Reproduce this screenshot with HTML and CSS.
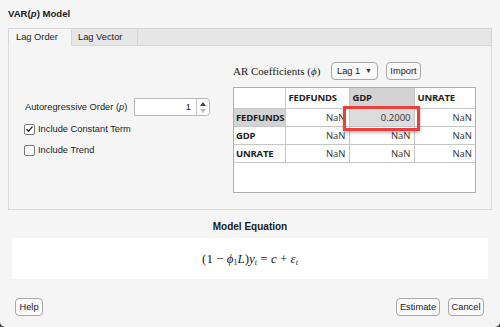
FILE: index.html
```html
<!DOCTYPE html>
<html>
<head>
<meta charset="utf-8">
<link rel="stylesheet" href="styles.css">
</head>
<body>
<div class="window">
  <div class="title">VAR(<i>p</i>) Model</div>
  <div class="tabs">
    <div class="tab active">Lag Order</div>
    <div class="tab second">Lag Vector</div>
    <div class="tab-fill"></div>
  </div>
  <div class="panel">
    <div class="left">
      <div class="order-row">
        <span class="label">Autoregressive Order (<i>p</i>)</span>
        <div class="spinner">
          <div class="spin-value">1</div>
          <div class="spin-btns">
            <span class="up"></span>
            <span class="down"></span>
          </div>
        </div>
      </div>
      <label class="check-row">
        <span class="box checked">
          <svg width="10" height="10" viewBox="0 0 10 10"><path d="M1.8 5.2 L3.9 7.4 L8.3 2.4" fill="none" stroke="#222" stroke-width="1.5"/></svg>
        </span>
        <span>Include Constant Term</span>
      </label>
      <label class="check-row">
        <span class="box"></span>
        <span>Include Trend</span>
      </label>
    </div>
    <div class="right">
      <div class="coef-row">
        <span class="coef-label">AR Coefficients (<i>ϕ</i>)</span>
        <div class="dropdown"><span>Lag 1</span><span class="caret">▼</span></div>
        <div class="btn small">Import</div>
      </div>
      <div class="table-wrap">
        <table class="grid">
          <colgroup><col class="c0"><col class="c1"><col class="c2"><col class="c3"></colgroup>
          <tr class="hdr">
            <th class="corner"></th>
            <th>FEDFUNDS</th>
            <th class="sel">GDP</th>
            <th>UNRATE</th>
          </tr>
          <tr>
            <th class="rh sel">FEDFUNDS</th>
            <td>NaN</td>
            <td class="cur">0.2000<span class="mark"></span></td>
            <td>NaN</td>
          </tr>
          <tr>
            <th class="rh">GDP</th>
            <td>NaN</td>
            <td>NaN</td>
            <td>NaN</td>
          </tr>
          <tr>
            <th class="rh">UNRATE</th>
            <td>NaN</td>
            <td>NaN</td>
            <td>NaN</td>
          </tr>
        </table>
      </div>
    </div>
  </div>
  <div class="eq-title">Model Equation</div>
  <div class="eq-box">
    <span class="eq">(1 − <i>ϕ</i><sub>1</sub><i>L</i>)<i>y<sub>t</sub></i> = <i>c</i> + <i>ε<sub>t</sub></i></span>
  </div>
  <div class="footer">
    <div class="btn help">Help</div>
    <div class="spacer"></div>
    <div class="btn estimate">Estimate</div>
    <div class="btn cancel">Cancel</div>
  </div>
</div>
</body>
</html>
```

FILE: styles.css
```css
* { box-sizing: border-box; }
html, body { margin: 0; padding: 0; }
body {
  width: 500px;
  height: 327px;
  background: #3a3a3a;
  font-family: "Liberation Sans", Arial, sans-serif;
  font-size: 9.3px;
  color: #1a1a1a;
  overflow: hidden;
  white-space: nowrap;
}
.window {
  width: 500px;
  height: 327px;
  background: #f5f5f5;
  border-radius: 0 0 5px 5px;
  display: flex;
  flex-direction: column;
}
.title {
  font-weight: bold;
  padding: 8px 0 0 8px;
  height: 28px;
  font-size: 9.6px;
}
.tabs {
  display: flex;
  margin: 0 8px 0 8px;
  height: 18px;
}
.tab {
  border: 1px solid #d6d6d6;
  background: #e6e6e6;
  padding: 3px 0 0 7px;
  color: #222;
}
.tab.active {
  width: 64px;
  background: #f5f5f5;
  border-bottom-color: #f5f5f5;
}
.tab.second { width: 66px; border-left: none; padding-left: 6px; }
.tab-fill {
  flex: 1;
  background: #e6e6e6;
  border: 1px solid #d6d6d6;
  border-left: none;
}
.panel {
  margin: 0 8px;
  height: 164px;
  border: 1px solid #dadada;
  border-top: none;
  display: flex;
}
.left {
  width: 224px;
  padding: 52px 0 0 16px;
  display: flex;
  flex-direction: column;
}
.order-row {
  display: flex;
  align-items: center;
  height: 18px;
}
.label { width: 109px; }
.spinner {
  display: flex;
  width: 76px;
  height: 18px;
  border: 1px solid #b8b8b8;
  border-radius: 0 4px 4px 0;
  background: #fff;
}
.spin-value {
  flex: 1;
  text-align: right;
  padding: 3px 5px 0 0;
  border-right: 1px solid #c8c8c8;
}
.spin-btns {
  width: 12px;
  display: flex;
  flex-direction: column;
  align-items: center;
  justify-content: center;
  gap: 3px;
  background: #fafafa;
  border-radius: 0 4px 4px 0;
}
.spin-btns .up {
  width: 0; height: 0;
  border-left: 3px solid transparent;
  border-right: 3px solid transparent;
  border-bottom: 4px solid #444;
}
.spin-btns .down {
  width: 0; height: 0;
  border-left: 3px solid transparent;
  border-right: 3px solid transparent;
  border-top: 4px solid #bbb;
}
.check-row {
  display: flex;
  align-items: center;
  gap: 3px;
  height: 12px;
  margin-top: 7px;
}
.check-row + .check-row { margin-top: 9px; }
.box {
  width: 11px;
  height: 11px;
  border: 1px solid #7a7a7a;
  border-radius: 2px;
  background: #fff;
  display: flex;
  align-items: center;
  justify-content: center;
  margin-left: -1px;
}
.box svg { display: block; }
.right {
  padding: 15px 0 0 0;
  display: flex;
  flex-direction: column;
}
.coef-row {
  display: flex;
  align-items: center;
  height: 19px;
}
.coef-label {
  font-family: "Liberation Serif", "Times New Roman", serif;
  font-size: 11px;
  width: 98px;
}
.dropdown {
  width: 47px;
  height: 18px;
  border: 1px solid #a8a8a8;
  border-radius: 4px;
  background: #f9f9f9;
  display: flex;
  align-items: center;
  justify-content: space-between;
  padding: 0 5px 0 5px;
  margin-right: 8px;
}
.caret { font-size: 7px; color: #333; }
.btn {
  height: 18px;
  border: 1px solid #a8a8a8;
  border-radius: 4px;
  background: #f9f9f9;
  display: flex;
  align-items: center;
  justify-content: center;
}
.btn.small { width: 35px; }
.table-wrap {
  margin-top: 7px;
  width: 243px;
  height: 106px;
  border: 1px solid #b0b0b0;
  background: #fff;
}
.grid {
  width: 241px;
  border-collapse: collapse;
  table-layout: fixed;
  font-family: "Open Sans", "Noto Sans", sans-serif;
  font-size: 9.5px;
}
.c0 { width: 51px; }
.c1 { width: 64px; }
.c2 { width: 65px; }
.c3 { width: 61px; }
.grid th, .grid td {
  border: 1px solid #c6c6c6;
  height: 18px;
  padding: 0 3px;
  overflow: visible;
}
.grid tr:first-child th { border-top: none; height: 20px; }
.grid tr th:first-child { border-left: none; padding-left: 2px; }
.grid tr > :last-child { border-right: none; }
.grid th {
  text-align: left;
  font-weight: bold;
  background: #fff;
  color: #222;
  letter-spacing: -0.2px;
}
.grid th.sel { background: #d3d3d3; }
.grid td { text-align: right; color: #333; }
.grid td.cur { background: #dcdcdc; position: relative; }
.mark {
  position: absolute;
  left: -7px;
  right: -6px;
  top: -3px;
  bottom: -5px;
  border: 3px solid #ee3d3d;
  box-shadow: 0 2px 3px rgba(0,0,0,0.25);
}
.eq-title {
  text-align: center;
  font-weight: bold;
  margin-top: 11px;
  height: 14px;
  font-size: 10px;
}
.eq-box {
  margin: 3px 12px 0 12px;
  height: 41px;
  background: #fff;
  display: flex;
  align-items: center;
  justify-content: center;
  padding-top: 1px;
}
.eq {
  font-family: "Liberation Serif", "Times New Roman", serif;
  font-size: 13px;
  color: #222;
}
.eq sub { font-size: 8px; vertical-align: -2px; }
.footer {
  display: flex;
  gap: 8px;
  padding: 19px 16px 0 15px;
}
.btn.help { width: 28px; }
.btn.estimate { width: 44px; }
.btn.cancel { width: 36px; }
.spacer { flex: 1; }
```
